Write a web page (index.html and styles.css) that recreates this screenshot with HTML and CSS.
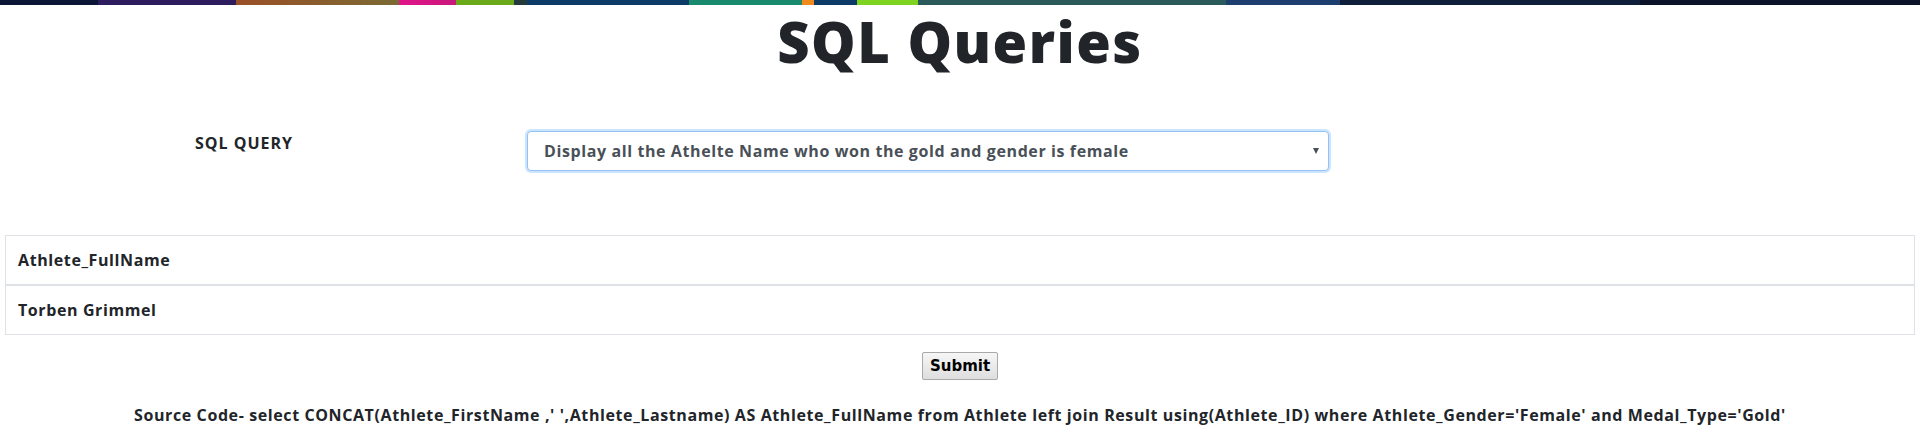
FILE: index.html
```html
<!DOCTYPE html>
<html lang="en">
<head>
<meta charset="utf-8">
<title>SQL Queries</title>
<link rel="stylesheet" href="styles.css">
</head>
<body>
<div class="banner"></div>
<h1 class="title">SQL Queries</h1>
<form class="query-form">
  <div class="query-row">
    <label class="query-label" for="q">SQL QUERY</label>
    <div class="select-wrap">
      <select id="q" class="query-select">
        <option>Display all the Athelte Name who won the gold and gender is female</option>
      </select>
    </div>
  </div>
  <table class="result-table">
    <thead>
      <tr><th>Athlete_FullName</th></tr>
    </thead>
    <tbody>
      <tr><td>Torben Grimmel</td></tr>
    </tbody>
  </table>
  <div class="actions">
    <button type="button" class="submit-btn">Submit</button>
  </div>
  <p class="source">Source Code- select CONCAT(Athlete_FirstName ,' ',Athlete_Lastname) AS Athlete_FullName from Athlete left join Result using(Athlete_ID) where Athlete_Gender='Female' and Medal_Type='Gold'</p>
</form>
</body>
</html>
```

FILE: styles.css
```css
html, body {
  margin: 0;
  padding: 0;
  background: #ffffff;
}
body {
  font-family: "Open Sans", "DejaVu Sans", sans-serif;
  color: #212529;
  font-size: 16px;
  line-height: 24px;
}
.banner {
  height: 5px;
  background: linear-gradient(to right,
    #0b1535 0px, #0b1535 98px,
    #2e1d5e 98px, #2e1d5e 236px,
    #9a4f26 236px, #7a6a35 398px,
    #e0148a 400px, #c8187a 456px,
    #6aaa1a 456px, #6aaa1a 514px,
    #253a3a 514px, #253a3a 527px,
    #0d3a66 527px, #0d3a66 689px,
    #1a8a6e 689px, #1a8a6e 802px,
    #f08a1a 802px, #f08a1a 814px,
    #0d3a66 814px, #0d3a66 857px,
    #7ed321 857px, #7ed321 918px,
    #2a5a5a 918px, #2a5a5a 1226px,
    #1d3e6e 1226px, #1d3e6e 1340px,
    #0f1e3a 1340px, #0f1e3a 1640px,
    #0a1328 1640px, #0a1328 1920px);
}
.title {
  margin: 3px 0 0;
  text-align: center;
  font-size: 56px;
  line-height: 67px;
  font-weight: 800;
  letter-spacing: 1.5px;
  color: #212529;
}
.query-form {
  margin: 56px 0 0;
}
.query-row {
  display: flex;
  align-items: flex-start;
  padding-left: 195px;
}
.query-label {
  width: 332px;
  font-weight: 700;
  font-size: 16px;
  line-height: 24px;
  letter-spacing: 1px;
}
.select-wrap {
  position: relative;
  width: 802px;
}
.query-select {
  display: block;
  width: 100%;
  height: 40px;
  margin: 0;
  padding: 0 30px 0 16px;
  border: 1px solid #94c0f3;
  border-radius: 4px;
  box-shadow: 0 0 0 2px rgba(0, 123, 255, 0.2);
  background: #ffffff;
  font-family: "Open Sans", "DejaVu Sans", sans-serif;
  font-size: 16px;
  font-weight: 700;
  letter-spacing: 0.6px;
  color: #495057;
  appearance: none;
  -webkit-appearance: none;
  outline: none;
}
.select-wrap::after {
  content: "";
  position: absolute;
  right: 10px;
  top: 17px;
  border-left: 3px solid transparent;
  border-right: 3px solid transparent;
  border-top: 6px solid #495057;
  pointer-events: none;
}
.result-table {
  margin: 64px 5px 0;
  width: calc(100% - 10px);
  border-collapse: collapse;
}
.result-table th,
.result-table td {
  text-align: left;
  padding: 12px;
  border: 1px solid #dee2e6;
  font-weight: 700;
  font-size: 16px;
  line-height: 24px;
  letter-spacing: 0.6px;
}
.result-table thead th {
  border-bottom-width: 2px;
}
.actions {
  display: flex;
  justify-content: center;
  margin-top: 17px;
}
.submit-btn {
  font-family: "DejaVu Sans", sans-serif;
  font-weight: 700;
  font-size: 15px;
  line-height: 18px;
  color: #000000;
  padding: 4px 7px;
  border: 1px solid #a9a9a9;
  border-radius: 2px;
  background: linear-gradient(#f6f6f6, #dedede);
}
.source {
  margin: 23px 0 0;
  text-align: center;
  font-weight: 700;
  font-size: 16px;
  line-height: 24px;
  letter-spacing: 0.6px;
}
```
